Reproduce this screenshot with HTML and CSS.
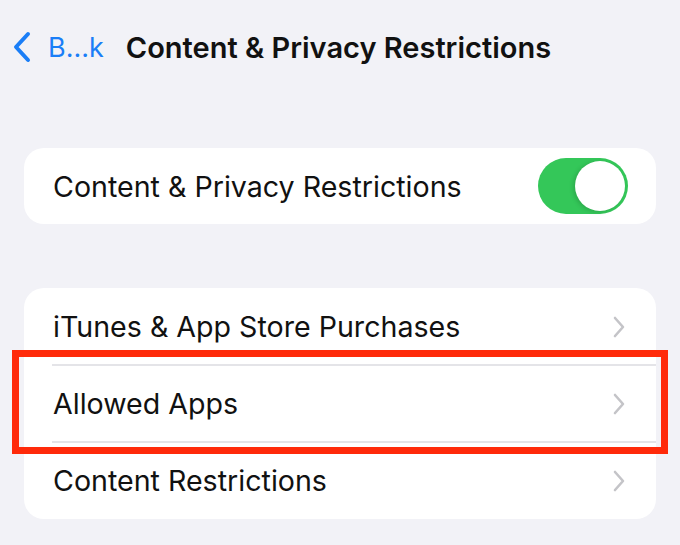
FILE: index.html
```html
<!DOCTYPE html>
<html>
<head>
<meta charset="utf-8">
<link rel="stylesheet" href="styles.css">
</head>
<body>
<header class="nav">
  <div class="back">
    <svg class="back-chev" width="20" height="32" viewBox="0 0 20 32"><path d="M16 3 L4 16 L16 29" fill="none" stroke="#1a7ef7" stroke-width="4" stroke-linecap="round" stroke-linejoin="round"/></svg>
    <span class="back-label">B...k</span>
  </div>
  <h1 class="title">Content &amp; Privacy Restrictions</h1>
</header>
<main class="content">
  <section class="card">
    <div class="row">
      <span class="label">Content &amp; Privacy Restrictions</span>
      <span class="toggle"><span class="knob"></span></span>
    </div>
  </section>
  <section class="card list">
    <div class="row">
      <span class="label">iTunes &amp; App Store Purchases</span>
      <svg class="chev" width="14" height="24" viewBox="0 0 14 24"><path d="M3 3 L11 12 L3 21" fill="none" stroke="#c4c4c8" stroke-width="2.6" stroke-linecap="round" stroke-linejoin="round"/></svg>
    </div>
    <div class="row highlighted">
      <span class="label">Allowed Apps</span>
      <svg class="chev" width="14" height="24" viewBox="0 0 14 24"><path d="M3 3 L11 12 L3 21" fill="none" stroke="#c4c4c8" stroke-width="2.6" stroke-linecap="round" stroke-linejoin="round"/></svg>
      <span class="highlight"></span>
    </div>
    <div class="row">
      <span class="label">Content Restrictions</span>
      <svg class="chev" width="14" height="24" viewBox="0 0 14 24"><path d="M3 3 L11 12 L3 21" fill="none" stroke="#c4c4c8" stroke-width="2.6" stroke-linecap="round" stroke-linejoin="round"/></svg>
    </div>
  </section>
</main>
</body>
</html>
```
FILE: styles.css
```css
* { box-sizing: border-box; }
html, body { margin: 0; padding: 0; }
body {
  background: #f2f2f7;
  font-family: Inter, "Liberation Sans", Arial, sans-serif;
  color: #111;
  width: 680px;
  height: 545px;
  overflow: hidden;
}
.nav {
  display: flex;
  align-items: center;
  height: 94px;
  padding: 0 0 0 12px;
}
.back {
  display: flex;
  align-items: center;
  gap: 16px;
  color: #1a7ef7;
}
.back-chev { display: block; }
.back-label {
  font-size: 27px;
  letter-spacing: 0;
}
.title {
  margin: 0 0 0 22px;
  font-size: 29px;
  font-weight: 600;
  letter-spacing: 0;
  color: #111;
}
.content {
  display: flex;
  flex-direction: column;
  gap: 64px;
  padding: 54px 24px 0 24px;
}
.card {
  background: #fff;
  border-radius: 20px;
}
.row {
  position: relative;
  display: flex;
  align-items: center;
  justify-content: space-between;
  height: 76px;
  padding: 0 28px 0 29px;
}
.list .row { height: 77px; padding-right: 30px; }
.list .row + .row::before {
  content: "";
  position: absolute;
  left: 28px;
  right: 0;
  top: -1px;
  height: 2px;
  background: #e4e4e8;
}
.label {
  font-size: 28.6px;
  letter-spacing: 0;
  color: #111;
}
.toggle {
  display: flex;
  align-items: center;
  justify-content: flex-end;
  width: 90px;
  height: 56px;
  border-radius: 28px;
  background: #34c759;
  padding: 3px;
}
.knob {
  width: 50px;
  height: 50px;
  border-radius: 50%;
  background: #fff;
  box-shadow: -2px 1px 4px rgba(0,0,0,0.15);
}
.chev { display: block; }
.highlight {
  position: absolute;
  left: -12px;
  right: -12px;
  top: -15px;
  bottom: -12px;
  border: 7px solid #ff2a0a;
  pointer-events: none;
}
```
